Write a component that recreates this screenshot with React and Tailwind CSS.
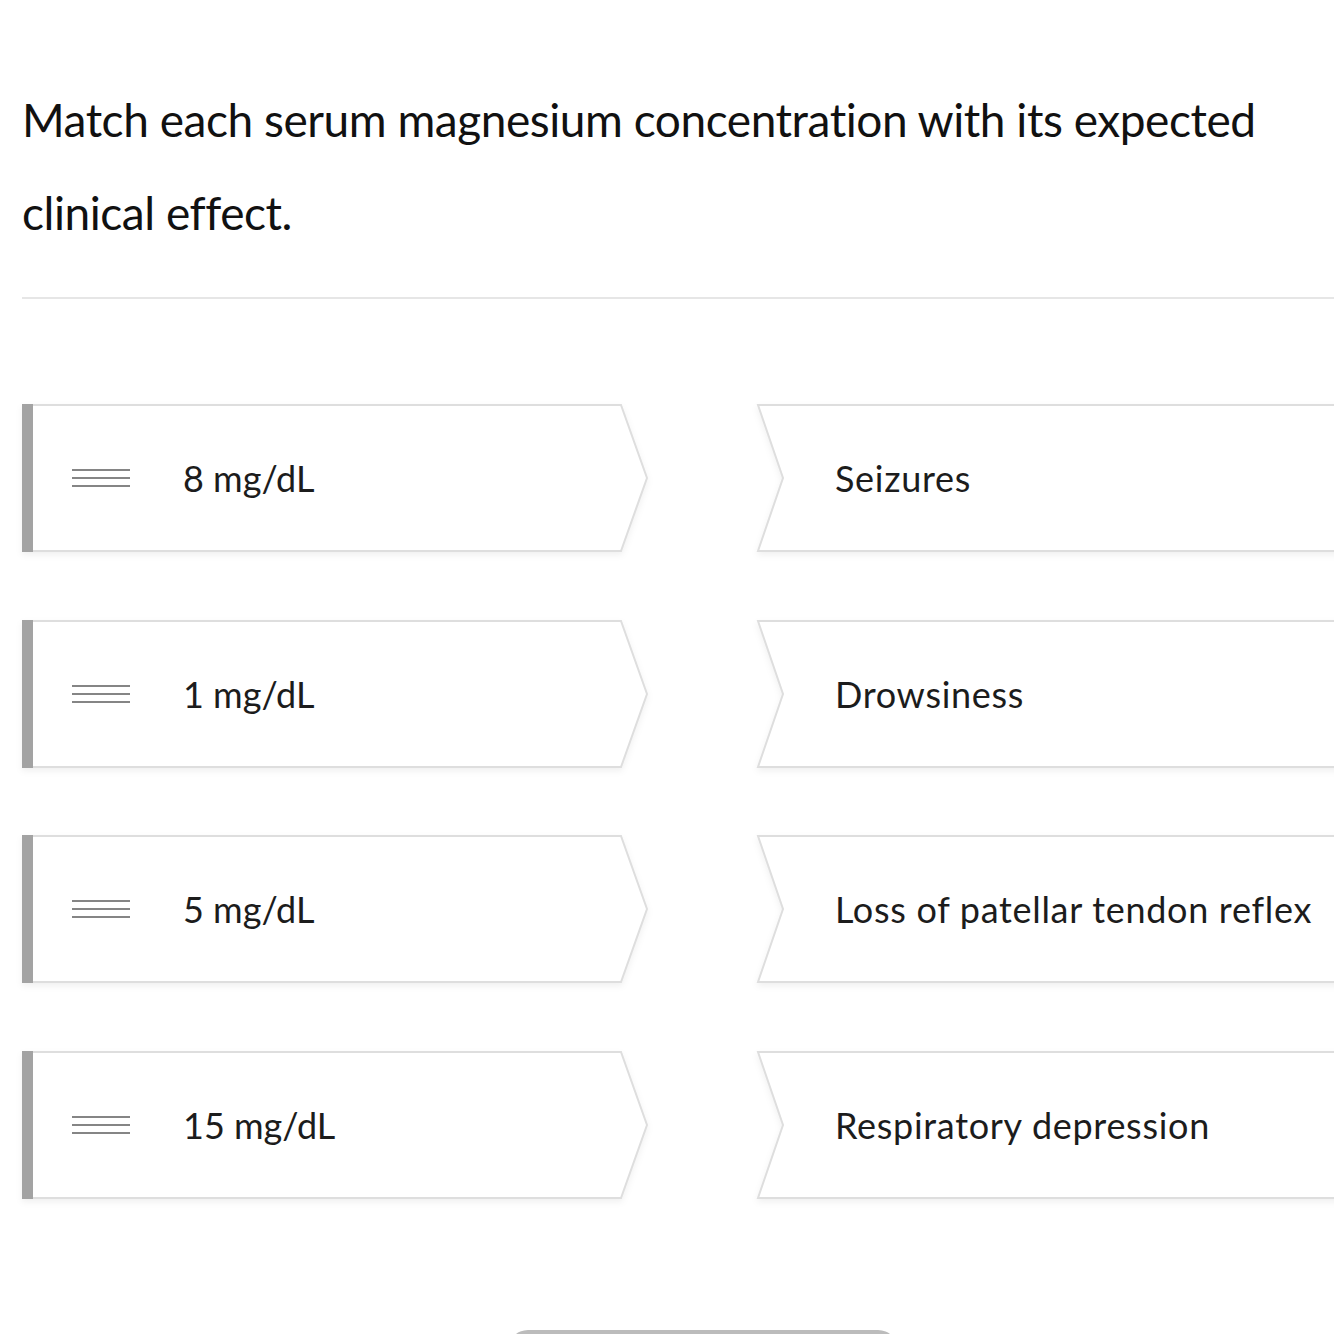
const ROWS = [
  { left: "8 mg/dL", right: "Seizures" },
  { left: "1 mg/dL", right: "Drowsiness" },
  { left: "5 mg/dL", right: "Loss of patellar tendon reflex" },
  { left: "15 mg/dL", right: "Respiratory depression" },
];

function LeftCard({ label }) {
  return (
    <div className="relative w-[626px] h-[148px] shrink-0">
      <svg
        className="absolute inset-0 overflow-visible drop-shadow-[0_3px_3px_rgba(0,0,0,0.06)]"
        width="626"
        height="148"
        viewBox="0 0 626 148"
      >
        <polygon
          points="1,1 599,1 625,74 599,147 1,147"
          fill="#fff"
          stroke="#dedede"
          strokeWidth="2"
        />
        <rect x="0" y="0" width="11" height="148" fill="#a3a3a3" />
      </svg>
      <div className="relative h-full flex items-center">
        <div className="ml-[50px] w-[58px] flex flex-col gap-[6px]">
          <div className="h-[2px] bg-[#858585]" />
          <div className="h-[2px] bg-[#858585]" />
          <div className="h-[2px] bg-[#858585]" />
        </div>
        <span className="ml-[53px] text-[36px] text-[#1c1c1c]">{label}</span>
      </div>
    </div>
  );
}

function RightCard({ label }) {
  return (
    <div className="relative w-[626px] h-[148px] shrink-0">
      <svg
        className="absolute inset-0 overflow-visible drop-shadow-[0_3px_3px_rgba(0,0,0,0.06)]"
        width="626"
        height="148"
        viewBox="0 0 626 148"
      >
        <polygon
          points="1,1 640,1 640,147 1,147 26,74"
          fill="#fff"
          stroke="#dedede"
          strokeWidth="2"
        />
      </svg>
      <div className="relative h-full flex items-center pl-[78px]">
        <span className="text-[36px] tracking-[0.7px] text-[#1c1c1c]">{label}</span>
      </div>
    </div>
  );
}

export default function App() {
  return (
    <div className="w-[1334px] h-[1334px] overflow-hidden bg-white font-['Lato','Liberation_Sans',sans-serif]">
      <div className="w-[1361px] ml-[22px] pt-[73px]">
        <h1 className="text-[46px] leading-[93px] text-[#111] tracking-[-0.45px]">
          Match each serum magnesium concentration with its expected clinical effect.
        </h1>
        <div className="mt-[38px] h-[2px] bg-[#e6e6e6]" />
        <div className="mt-[105px] flex flex-col gap-[67.5px]">
          {ROWS.map((r) => (
            <div key={r.left} className="flex gap-[109px]">
              <LeftCard label={r.left} />
              <RightCard label={r.right} />
            </div>
          ))}
        </div>
        <div className="mt-[131px] mx-auto w-[390px] h-[40px] rounded-t-[20px] bg-[#bcbcbc]" />
      </div>
    </div>
  );
}
